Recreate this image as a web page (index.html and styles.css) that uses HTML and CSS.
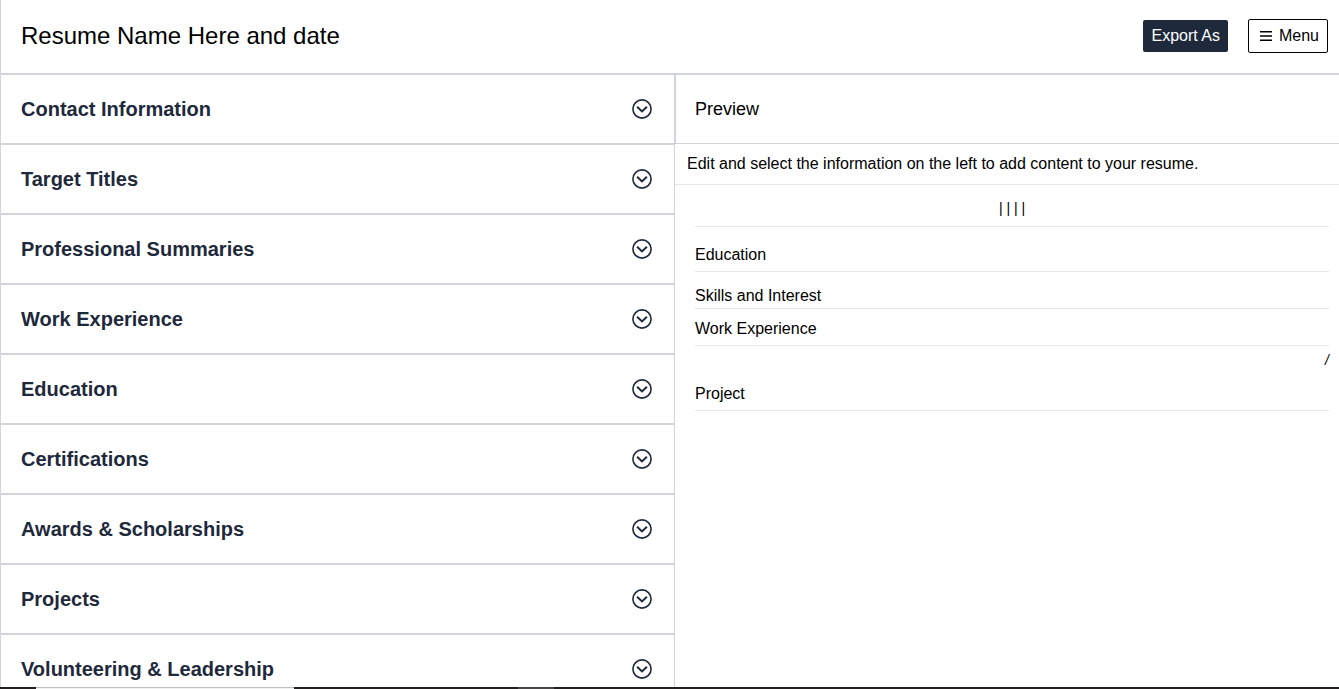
FILE: index.html
```html
<!DOCTYPE html>
<html lang="en">
<head>
<meta charset="utf-8">
<title>Resume Builder</title>
<link rel="stylesheet" href="styles.css">
</head>
<body>
<svg class="sprite" aria-hidden="true">
  <symbol id="chevron" viewBox="0 0 20 20">
    <circle cx="10" cy="10" r="9.1" fill="none" stroke="currentColor" stroke-width="1.6"/>
    <path d="M5.100 7.700 10 12.400l4.900-4.700" fill="none" stroke="currentColor" stroke-width="2"/>
  </symbol>
</svg>
<header class="topbar">
  <h1 class="title">Resume Name Here and date</h1>
  <div class="actions">
    <button class="btn btn-dark" type="button">Export As</button>
    <button class="btn btn-outline" type="button">
      <svg class="bars" viewBox="0 0 12 10" aria-hidden="true"><path d="M0 .7h12M0 5h12M0 9.300h12" stroke="currentColor" stroke-width="1.4"/></svg>
      Menu
    </button>
  </div>
</header>
<main class="panes">
  <section class="sections">
    <button class="row" type="button">Contact Information<svg class="chev"><use href="#chevron"/></svg></button>
    <button class="row" type="button">Target Titles<svg class="chev"><use href="#chevron"/></svg></button>
    <button class="row" type="button">Professional Summaries<svg class="chev"><use href="#chevron"/></svg></button>
    <button class="row" type="button">Work Experience<svg class="chev"><use href="#chevron"/></svg></button>
    <button class="row" type="button">Education<svg class="chev"><use href="#chevron"/></svg></button>
    <button class="row" type="button">Certifications<svg class="chev"><use href="#chevron"/></svg></button>
    <button class="row" type="button">Awards &amp; Scholarships<svg class="chev"><use href="#chevron"/></svg></button>
    <button class="row" type="button">Projects<svg class="chev"><use href="#chevron"/></svg></button>
    <button class="row" type="button">Volunteering &amp; Leadership<svg class="chev"><use href="#chevron"/></svg></button>
  </section>
  <section class="preview">
    <h2 class="preview-title">Preview</h2>
    <p class="hint">Edit and select the information on the left to add content to your resume.</p>
    <div class="resume">
      <p class="contact">| | | |</p>
      <h3 class="heading heading-education">Education</h3>
      <h3 class="heading heading-skills">Skills and Interest</h3>
      <h3 class="heading heading-work">Work Experience</h3>
      <p class="dates">/</p>
      <h3 class="heading heading-project">Project</h3>
    </div>
  </section>
</main>
<footer class="edge"><span class="edge-light"></span><span class="edge-grey"></span></footer>
</body>
</html>
```
FILE: styles.css
```css
* {
  box-sizing: border-box;
  margin: 0;
}

body {
  display: flex;
  flex-direction: column;
  height: 100vh;
  overflow: hidden;
  background: #fff;
  color: #000;
  font: 16px/24px "Liberation Sans", Arial, sans-serif;
}

.sprite {
  display: none;
}

.topbar {
  display: flex;
  flex: none;
  align-items: center;
  justify-content: space-between;
  padding: 19px 11px 20px 20px;
  border-left: 1px solid #d1d5db;
  border-bottom: 2px solid #d1d5db;
}

.title {
  font-size: 24px;
  line-height: 32px;
  font-weight: 400;
}

.actions {
  display: flex;
  align-items: center;
  gap: 20px;
}

.btn {
  display: flex;
  align-items: center;
  gap: 7px;
  padding: 4px 8px;
  border: 0;
  border-radius: 2px;
  font: inherit;
}

.btn-dark {
  background: #1e293b;
  color: #fff;
}

.btn-outline {
  padding: 4px 8px 4px 11px;
  border: 1px solid #000;
  background: #fff;
  color: #000;
}

.bars {
  width: 12px;
  height: 10px;
}

.panes {
  display: grid;
  grid-template-columns: 674fr 665fr;
  flex: 1;
  min-height: 0;
  overflow: hidden;
}

.sections {
  border-left: 1px solid #d1d5db;
}

.row {
  display: flex;
  align-items: center;
  justify-content: space-between;
  width: 100%;
  padding: 20px 22px 20px 20px;
  border: 0;
  border-bottom: 2px solid #d1d5db;
  background: #fff;
  color: #1e293b;
  font: bold 20px/28px "Liberation Sans", Arial, sans-serif;
  text-align: left;
}

.chev {
  width: 20px;
  height: 20px;
}

.preview {
  border-left: 1px solid #d1d5db;
}

.preview-title {
  padding: 20px 20px 20px 19px;
  border-left: 1px solid #d1d5db;
  border-bottom: 1px solid #d1d5db;
  font-size: 18px;
  line-height: 28px;
  font-weight: 400;
}

.hint {
  padding: 8px 12px;
  border-bottom: 1px solid #e5e7eb;
}

.resume {
  padding: 13px 10px 0 20px;
}

.contact {
  padding-bottom: 8px;
  border-bottom: 1px solid #e5e7eb;
  font-size: 14px;
  line-height: 20px;
  text-align: center;
}

.heading {
  border-bottom: 1px solid #e5e7eb;
  font-size: 16px;
  line-height: 24px;
  font-weight: 400;
}

.heading-education {
  padding: 16px 0 4px;
}

.heading-skills {
  padding-top: 12px;
}

.heading-work {
  padding: 8px 0 4px;
}

.dates {
  padding-top: 4px;
  font-size: 14px;
  line-height: 20px;
  font-style: italic;
  text-align: right;
}

.heading-project {
  padding: 12px 0 4px;
}

.edge {
  display: flex;
  flex: none;
  height: 2px;
  padding-left: 36px;
  gap: 224px;
  background: #231f20;
}

.edge-light {
  width: 258px;
  border-top: 1px solid #bfbfbf;
  background: #f2f2f2;
}

.edge-grey {
  width: 36px;
  background: #484646;
}
```
